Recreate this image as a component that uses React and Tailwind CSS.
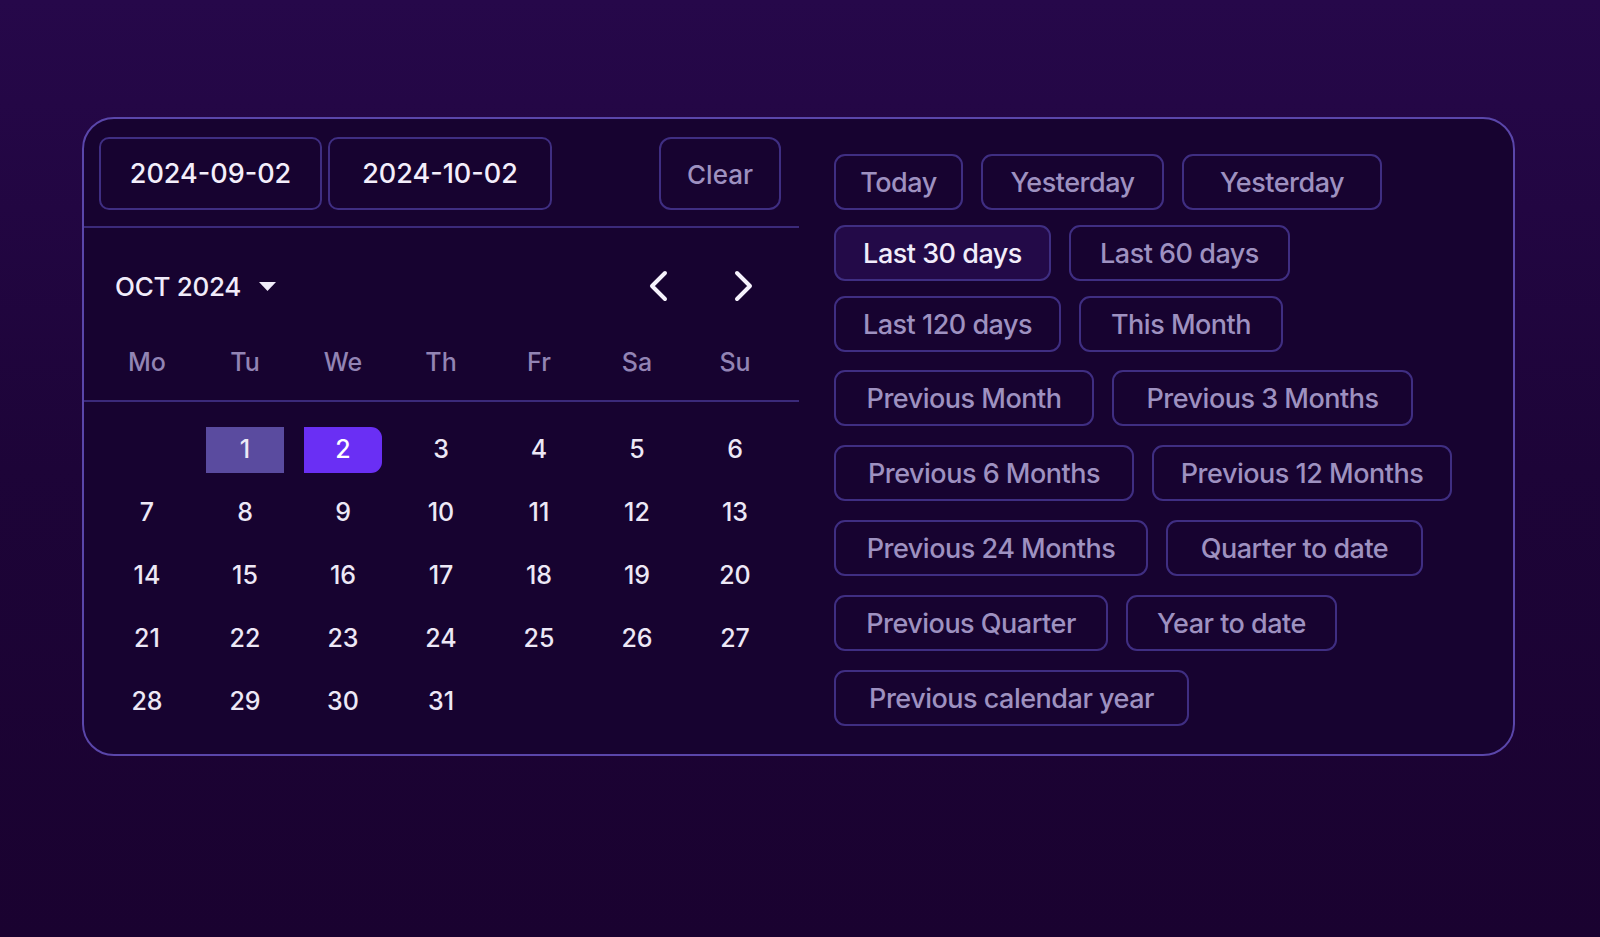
import React from "react";

const weekDays = ["Mo", "Tu", "We", "Th", "Fr", "Sa", "Su"];

const presetRows = [
  [
    { label: "Today", w: "w-[129px]" },
    { label: "Yesterday", w: "w-[183px]" },
    { label: "Yesterday", w: "w-[200px]" },
  ],
  [
    { label: "Last 30 days", w: "w-[217px]", active: true },
    { label: "Last 60 days", w: "w-[221px]" },
  ],
  [
    { label: "Last 120 days", w: "w-[227px]" },
    { label: "This Month", w: "w-[204px]" },
  ],
];

const presetRows2 = [
  [
    { label: "Previous Month", w: "w-[260px]" },
    { label: "Previous 3 Months", w: "w-[301px]" },
  ],
  [
    { label: "Previous 6 Months", w: "w-[300px]" },
    { label: "Previous 12 Months", w: "w-[300px]" },
  ],
  [
    { label: "Previous 24 Months", w: "w-[314px]" },
    { label: "Quarter to date", w: "w-[257px]" },
  ],
  [
    { label: "Previous Quarter", w: "w-[274px]" },
    { label: "Year to date", w: "w-[211px]" },
  ],
  [{ label: "Previous calendar year", w: "w-[355px]" }],
];

function PresetButton({ label, w, active }) {
  return (
    <button
      className={
        w +
        " h-[56px] pt-[2px] flex-shrink-0 rounded-[11px] border-2 border-[#3f2e82] text-[27px] font-medium tracking-[-0.5px] " +
        (active
          ? "bg-[#230a48] text-[#f1ecfa]"
          : "bg-transparent text-[#9e91c0]")
      }
    >
      {label}
    </button>
  );
}

function DayCell({ day }) {
  if (!day) return <div className="h-[46px]" />;
  let cls = "text-[#ede8f6]";
  if (day === 1) cls = "bg-[#5a4b9f] text-[#ede8f6]";
  if (day === 2) cls = "bg-[#6a2ff4] text-white rounded-r-[11px]";
  return (
    <div
      className={
        "w-[78px] h-[46px] mx-auto flex items-center justify-center text-[25px] font-medium " +
        cls
      }
    >
      {day}
    </div>
  );
}

function App() {
  // October 2024 starts on a Tuesday
  const days = [null, ...Array.from({ length: 31 }, (_, i) => i + 1)];

  return (
    <div
      className="w-full h-[937px] bg-linear-to-b from-[#26084a] via-[#1d0438] to-[#1a0230] pt-[117px] pl-[82px]"
      style={{ fontFamily: "Inter, 'Noto Sans', sans-serif" }}
    >
      <div className="w-[1433px] h-[639px] flex rounded-[32px] border-2 border-[#5a46aa] bg-[#170330]">
        {/* calendar side */}
        <div className="w-[715px] flex flex-col">
          <div className="flex items-center pt-[18px] pb-[16px] pl-[15px] pr-[18px] border-b-2 border-[#3b2a7a]">
            <div className="w-[223px] h-[73px] pt-[2px] flex items-center justify-center rounded-[10px] border-2 border-[#3f2e82] text-[27px] font-medium text-[#f3eefb]">
              2024-09-02
            </div>
            <div className="w-[224px] h-[73px] pt-[2px] ml-[6px] flex items-center justify-center rounded-[10px] border-2 border-[#3f2e82] text-[27px] font-medium text-[#f3eefb]">
              2024-10-02
            </div>
            <button className="ml-auto w-[122px] h-[73px] pt-[2px] rounded-[12px] border-2 border-[#3f2e82] text-[26px] font-medium text-[#9e91c0]">
              Clear
            </button>
          </div>

          <div className="mt-[28px] h-[60px] flex items-center pl-[31px] pr-[42px]">
            <span className="text-[26px] font-medium text-[#f1ecfa] tracking-[-0.3px]">OCT 2024</span>
            <svg className="ml-[17px]" width="19" height="11" viewBox="0 0 19 11">
              <path d="M1 1 L18 1 L9.5 10 Z" fill="#f1ecfa" />
            </svg>
            <div className="ml-auto flex items-center gap-[56px]">
              <svg width="28" height="32" viewBox="0 0 28 32" fill="none">
                <path d="M20 3 L7 16 L20 29" stroke="#f6f2fc" strokeWidth="4" strokeLinecap="round" strokeLinejoin="round" />
              </svg>
              <svg width="28" height="32" viewBox="0 0 28 32" fill="none">
                <path d="M8 3 L21 16 L8 29" stroke="#f6f2fc" strokeWidth="4" strokeLinecap="round" strokeLinejoin="round" />
              </svg>
            </div>
          </div>

          <div className="mt-[22px] pb-[12px] pl-[14px] border-b-2 border-[#3b2a7a]">
            <div className="grid grid-cols-[repeat(7,98px)] h-[50px] items-center">
              {weekDays.map((d) => (
                <div key={d} className="text-center text-[25px] font-medium text-[#9284b4]">
                  {d}
                </div>
              ))}
            </div>
          </div>

          <div className="pt-[25px] pl-[14px] grid grid-cols-[repeat(7,98px)] gap-y-[17px]">
            {days.map((d, i) => (
              <DayCell key={i} day={d} />
            ))}
          </div>
        </div>

        {/* presets side */}
        <div className="flex-1 pl-[35px] pt-[35px] flex flex-col">
          <div className="flex flex-col gap-[15px]">
            {presetRows.map((row, i) => (
              <div key={i} className="flex gap-[18px]">
                {row.map((b, j) => (
                  <PresetButton key={j} {...b} />
                ))}
              </div>
            ))}
          </div>
          <div className="mt-[18px] flex flex-col gap-[19px]">
            {presetRows2.map((row, i) => (
              <div key={i} className="flex gap-[18px]">
                {row.map((b, j) => (
                  <PresetButton key={j} {...b} />
                ))}
              </div>
            ))}
          </div>
        </div>
      </div>
    </div>
  );
}

export default App;
